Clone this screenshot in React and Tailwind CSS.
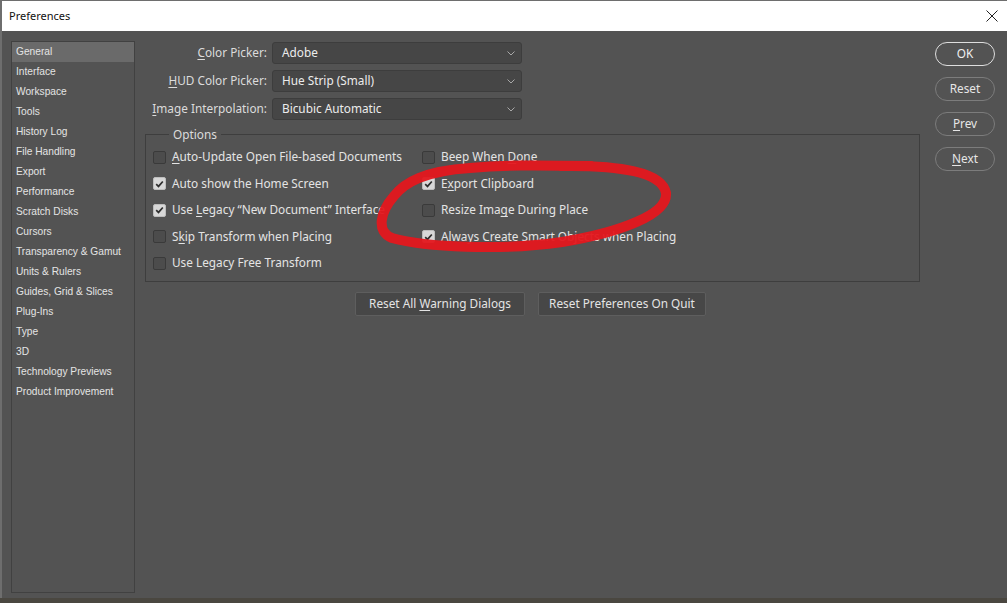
import React from "react";

const sections = [
  "General",
  "Interface",
  "Workspace",
  "Tools",
  "History Log",
  "File Handling",
  "Export",
  "Performance",
  "Scratch Disks",
  "Cursors",
  "Transparency & Gamut",
  "Units & Rulers",
  "Guides, Grid & Slices",
  "Plug-Ins",
  "Type",
  "3D",
  "Technology Previews",
  "Product Improvement",
];

// text with one underlined access key
const Key = ({ pre, k, post }) => (
  <span>
    {pre}
    <span className="underline underline-offset-2">{k}</span>
    {post}
  </span>
);

const Select = ({ value }) => (
  <div className="w-[250px] h-[22px] flex items-center justify-between pl-[9px] pr-[6px] bg-[#464646] border border-[#3d3d3d] rounded-[3px] text-[#ececec]">
    <span>{value}</span>
    <svg width="8" height="5" viewBox="0 0 8 5" className="mt-[1px]">
      <path d="M0.5 0.5 L4 4 L7.5 0.5" fill="none" stroke="#a8a8a8" strokeWidth="1" />
    </svg>
  </div>
);

const Check = ({ checked, children }) => (
  <div className="h-[26.5px] flex items-center gap-[6px]">
    <div
      className={
        checked
          ? "w-[13px] h-[13px] rounded-[2px] bg-[#d8d8d8] border border-[#bdbdbd] flex items-center justify-center"
          : "w-[13px] h-[13px] rounded-[2px] bg-[#4c4c4c] border border-[#3a3a3a]"
      }
    >
      {checked && (
        <svg width="9" height="8" viewBox="0 0 9 8">
          <path d="M1.2 4.2 L3.5 6.4 L7.8 1.5" fill="none" stroke="#2e2e2e" strokeWidth="1.7" />
        </svg>
      )}
    </div>
    <span>{children}</span>
  </div>
);

const PillButton = ({ children, primary }) => (
  <div
    className={
      primary
        ? "w-[60px] h-[24px] rounded-full border-[1.5px] border-[#dedede] flex items-center justify-center text-[#f0f0f0]"
        : "w-[60px] h-[24px] rounded-full border border-[#7c7c7c] flex items-center justify-center text-[#e6e6e6]"
    }
  >
    {children}
  </div>
);

export default function App() {
  return (
    <div className="relative w-[1007px] h-[603px] overflow-hidden bg-[#4a4740] font-['Noto_Sans','Open_Sans',sans-serif] text-[11.8px] select-none">
      <div className="h-[598px] flex flex-col bg-[#535353] border-l-[2px] border-t border-[#6e6e6e]">
        {/* title bar */}
        <div className="h-[30px] bg-white flex items-center justify-between pl-[7px] pr-[9px] text-[#111]">
          <span className="text-[11px]">Preferences</span>
          <svg width="12" height="12" viewBox="0 0 12 12">
            <path d="M0.5 0.5 L11.5 11.5 M11.5 0.5 L0.5 11.5" stroke="#222" strokeWidth="1" />
          </svg>
        </div>

        <div className="flex-1 flex pt-[10px] pl-[9px] pb-[5px]">
          {/* sidebar */}
          <div className="w-[124px] border border-[#414141] font-['Liberation_Sans',sans-serif] text-[10.2px] text-[#e4e4e4]">
            {sections.map((s, i) => (
              <div
                key={s}
                className={
                  i === 0
                    ? "h-[20px] flex items-center pl-[4px] bg-[#6a6a6a]"
                    : "h-[20px] flex items-center pl-[4px]"
                }
              >
                {s}
              </div>
            ))}
          </div>

          {/* main */}
          <div className="ml-[10px] pt-[1px] w-[775px] flex flex-col text-[#e4e4e4]">
            <div className="flex flex-col gap-[6px]">
              {[
                [<Key key="a" k="C" post="olor Picker:" />, "Adobe"],
                [<Key key="b" k="H" post="UD Color Picker:" />, "Hue Strip (Small)"],
                [<Key key="c" k="I" post="mage Interpolation:" />, "Bicubic Automatic"],
              ].map(([label, value], i) => (
                <div key={i} className="flex items-center gap-[5px]">
                  <div className="w-[122px] text-right text-[#dcdcdc]">{label}</div>
                  <Select value={value} />
                </div>
              ))}
            </div>

            <fieldset className="mt-[6px] border border-[#3e3e3e] pl-[7px] pt-[2px] pb-[4px]">
              <legend className="ml-[16px] px-[4px] leading-[16px] text-[#dcdcdc]">Options</legend>
              <div className="flex">
                <div className="w-[269px] flex flex-col">
                  <Check>
                    <Key k="A" post="uto-Update Open File-based Documents" />
                  </Check>
                  <Check checked>Auto show the Home Screen</Check>
                  <Check checked>
                    <Key pre="Use " k="L" post="egacy “New Document” Interface" />
                  </Check>
                  <Check>
                    <Key pre="S" k="k" post="ip Transform when Placing" />
                  </Check>
                  <Check>Use Legacy Free Transform</Check>
                </div>
                <div className="flex flex-col">
                  <Check>
                    <Key pre="Beep When " k="D" post="one" />
                  </Check>
                  <Check checked>
                    <Key pre="E" k="x" post="port Clipboard" />
                  </Check>
                  <Check>
                    <Key pre="Resize Ima" k="g" post="e During Place" />
                  </Check>
                  <Check checked>Always Create Smart Objects when Placing</Check>
                </div>
              </div>
            </fieldset>

            <div className="mt-[10px] flex justify-center gap-[13px] pr-[4px]">
              <div className="w-[170px] h-[24px] flex items-center justify-center bg-[#474747] border border-[#5e5e5e] rounded-[2px]">
                <Key pre="Reset All " k="W" post="arning Dialogs" />
              </div>
              <div className="w-[168px] h-[24px] flex items-center justify-center bg-[#474747] border border-[#5e5e5e] rounded-[2px]">
                Reset Preferences On Quit
              </div>
            </div>
          </div>

          {/* right buttons */}
          <div className="ml-[15px] pt-[1px] flex flex-col gap-[11px]">
            <PillButton primary>OK</PillButton>
            <PillButton>Reset</PillButton>
            <PillButton>
              <Key k="P" post="rev" />
            </PillButton>
            <PillButton>
              <Key k="N" post="ext" />
            </PillButton>
          </div>
        </div>
      </div>

      {/* red marker annotation drawn over the dialog */}
      <svg className="absolute inset-0 pointer-events-none" width="1007" height="603" viewBox="0 0 1007 603">
        <path
          d="M560 166 C620 165 662 172 666 193 C668 214 622 232 562 242 C500 251 425 247 392 238 C376 232 380 212 394 196 C405 182 425 171 470 168 C505 165 530 165 592 166"
          fill="none"
          stroke="#e4171d"
          strokeWidth="10"
          strokeLinecap="round"
          strokeLinejoin="round"
          opacity="0.95"
        />
      </svg>
    </div>
  );
}
